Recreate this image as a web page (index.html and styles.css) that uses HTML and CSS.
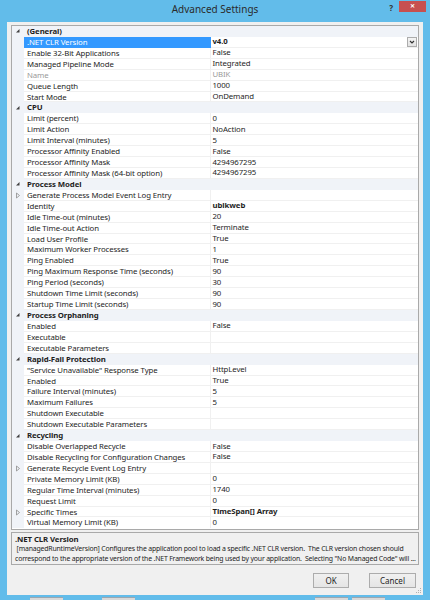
FILE: index.html
```html
<!DOCTYPE html>
<html lang="en">
<head>
    <meta charset="UTF-8">
    <meta name="viewport" content="width=device-width, initial-scale=1.0">
    <title>Advanced Settings</title>
    <link rel="stylesheet" href="styles.css">
</head>
<body>
<div class="window">
    <div class="titlebar">
        <div class="title">Advanced Settings</div>
        <div class="controls">
            <span class="help">?</span>
            <span class="close">&#x2715;</span>
        </div>
    </div>

    <div class="client">
        <div class="grid">
            <!-- General -->
            <div class="row cat"><span class="gut"><svg class="open" width="6" height="6" viewBox="0 0 6 6"><polygon points="4.5,1 4.5,4.5 1,4.5"/></svg></span><span class="name">(General)</span></div>
            <div class="row sel"><span class="gut"></span><span class="name">.NET CLR Version</span><span class="val"><b>v4.0</b><span class="drop"><svg width="6" height="4" viewBox="0 0 6 4"><polyline points="1,1 3,3 5,1"/></svg></span></span></div>
            <div class="row"><span class="gut"></span><span class="name">Enable 32-Bit Applications</span><span class="val">False</span></div>
            <div class="row"><span class="gut"></span><span class="name">Managed Pipeline Mode</span><span class="val">Integrated</span></div>
            <div class="row off"><span class="gut"></span><span class="name">Name</span><span class="val">UBIK</span></div>
            <div class="row"><span class="gut"></span><span class="name">Queue Length</span><span class="val">1000</span></div>
            <div class="row"><span class="gut"></span><span class="name">Start Mode</span><span class="val">OnDemand</span></div>

            <!-- CPU -->
            <div class="row cat"><span class="gut"><svg class="open" width="6" height="6" viewBox="0 0 6 6"><polygon points="4.5,1 4.5,4.5 1,4.5"/></svg></span><span class="name">CPU</span></div>
            <div class="row"><span class="gut"></span><span class="name">Limit (percent)</span><span class="val">0</span></div>
            <div class="row"><span class="gut"></span><span class="name">Limit Action</span><span class="val">NoAction</span></div>
            <div class="row"><span class="gut"></span><span class="name">Limit Interval (minutes)</span><span class="val">5</span></div>
            <div class="row"><span class="gut"></span><span class="name">Processor Affinity Enabled</span><span class="val">False</span></div>
            <div class="row"><span class="gut"></span><span class="name">Processor Affinity Mask</span><span class="val">4294967295</span></div>
            <div class="row"><span class="gut"></span><span class="name">Processor Affinity Mask (64-bit option)</span><span class="val">4294967295</span></div>

            <!-- Process Model -->
            <div class="row cat"><span class="gut"><svg class="open" width="6" height="6" viewBox="0 0 6 6"><polygon points="4.5,1 4.5,4.5 1,4.5"/></svg></span><span class="name">Process Model</span></div>
            <div class="row"><span class="gut"><svg class="shut" width="6" height="7" viewBox="0 0 6 7"><polygon points="1.5,1 4.5,3.5 1.5,6"/></svg></span><span class="name">Generate Process Model Event Log Entry</span><span class="val"></span></div>
            <div class="row"><span class="gut"></span><span class="name">Identity</span><span class="val"><b>ubikweb</b></span></div>
            <div class="row"><span class="gut"></span><span class="name">Idle Time-out (minutes)</span><span class="val">20</span></div>
            <div class="row"><span class="gut"></span><span class="name">Idle Time-out Action</span><span class="val">Terminate</span></div>
            <div class="row"><span class="gut"></span><span class="name">Load User Profile</span><span class="val">True</span></div>
            <div class="row"><span class="gut"></span><span class="name">Maximum Worker Processes</span><span class="val">1</span></div>
            <div class="row"><span class="gut"></span><span class="name">Ping Enabled</span><span class="val">True</span></div>
            <div class="row"><span class="gut"></span><span class="name">Ping Maximum Response Time (seconds)</span><span class="val">90</span></div>
            <div class="row"><span class="gut"></span><span class="name">Ping Period (seconds)</span><span class="val">30</span></div>
            <div class="row"><span class="gut"></span><span class="name">Shutdown Time Limit (seconds)</span><span class="val">90</span></div>
            <div class="row"><span class="gut"></span><span class="name">Startup Time Limit (seconds)</span><span class="val">90</span></div>

            <!-- Process Orphaning -->
            <div class="row cat"><span class="gut"><svg class="open" width="6" height="6" viewBox="0 0 6 6"><polygon points="4.5,1 4.5,4.5 1,4.5"/></svg></span><span class="name">Process Orphaning</span></div>
            <div class="row"><span class="gut"></span><span class="name">Enabled</span><span class="val">False</span></div>
            <div class="row"><span class="gut"></span><span class="name">Executable</span><span class="val"></span></div>
            <div class="row"><span class="gut"></span><span class="name">Executable Parameters</span><span class="val"></span></div>

            <!-- Rapid-Fail Protection -->
            <div class="row cat"><span class="gut"><svg class="open" width="6" height="6" viewBox="0 0 6 6"><polygon points="4.5,1 4.5,4.5 1,4.5"/></svg></span><span class="name">Rapid-Fail Protection</span></div>
            <div class="row"><span class="gut"></span><span class="name">"Service Unavailable" Response Type</span><span class="val">HttpLevel</span></div>
            <div class="row"><span class="gut"></span><span class="name">Enabled</span><span class="val">True</span></div>
            <div class="row"><span class="gut"></span><span class="name">Failure Interval (minutes)</span><span class="val">5</span></div>
            <div class="row"><span class="gut"></span><span class="name">Maximum Failures</span><span class="val">5</span></div>
            <div class="row"><span class="gut"></span><span class="name">Shutdown Executable</span><span class="val"></span></div>
            <div class="row"><span class="gut"></span><span class="name">Shutdown Executable Parameters</span><span class="val"></span></div>

            <!-- Recycling -->
            <div class="row cat"><span class="gut"><svg class="open" width="6" height="6" viewBox="0 0 6 6"><polygon points="4.5,1 4.5,4.5 1,4.5"/></svg></span><span class="name">Recycling</span></div>
            <div class="row"><span class="gut"></span><span class="name">Disable Overlapped Recycle</span><span class="val">False</span></div>
            <div class="row"><span class="gut"></span><span class="name">Disable Recycling for Configuration Changes</span><span class="val">False</span></div>
            <div class="row"><span class="gut"><svg class="shut" width="6" height="7" viewBox="0 0 6 7"><polygon points="1.5,1 4.5,3.5 1.5,6"/></svg></span><span class="name">Generate Recycle Event Log Entry</span><span class="val"></span></div>
            <div class="row"><span class="gut"></span><span class="name">Private Memory Limit (KB)</span><span class="val">0</span></div>
            <div class="row"><span class="gut"></span><span class="name">Regular Time Interval (minutes)</span><span class="val">1740</span></div>
            <div class="row"><span class="gut"></span><span class="name">Request Limit</span><span class="val">0</span></div>
            <div class="row"><span class="gut"><svg class="shut" width="6" height="7" viewBox="0 0 6 7"><polygon points="1.5,1 4.5,3.5 1.5,6"/></svg></span><span class="name">Specific Times</span><span class="val"><b>TimeSpan[] Array</b></span></div>
            <div class="row last"><span class="gut"></span><span class="name">Virtual Memory Limit (KB)</span><span class="val">0</span></div>
        </div>

        <div class="desc">
            <div class="desc-title">.NET CLR Version</div>
            <div class="desc-line"> [managedRuntimeVersion] Configures the application pool to load a specific .NET CLR version.  The CLR version chosen should</div>
            <div class="desc-line">correspond to the appropriate version of the .NET Framework being used by your application.  Selecting "No Managed Code" will ...</div>
        </div>

        <div class="footer">
            <div class="buttons">
                <button class="btn ok">OK</button>
                <button class="btn cancel">Cancel</button>
            </div>
            <svg class="grip" width="6" height="6" viewBox="0 0 6 6">
                <rect x="4" y="0" width="1" height="1"/>
                <rect x="2" y="2" width="1" height="1"/><rect x="4" y="2" width="1" height="1"/>
                <rect x="0" y="4" width="1" height="1"/><rect x="2" y="4" width="1" height="1"/><rect x="4" y="4" width="1" height="1"/>
            </svg>
        </div>
    </div>

    <div class="behind">
        <span class="bit b1"></span>
        <span class="bit b2"></span>
        <span class="bit b3"></span>
        <span class="bit b4"></span>
    </div>
</div>
</body>
</html>
```

FILE: styles.css
```css
:root {
    --row: 10.93px;
    --line: #f0f0f0;
    --cat: #f0f3f8;
}
body {
    margin: 0;
    font-family: "Noto Sans", "Open Sans", sans-serif;
    font-size: 7.8px;
    letter-spacing: -0.1px;
    color: #1e1e1e;
}
.window {
    width: 430px;
    height: 600px;
    background-color: #62bcea;
    display: flex;
    flex-direction: column;
    overflow: hidden;
}
.titlebar {
    height: 22px;
    flex: none;
    display: grid;
    grid-template-columns: 1fr auto 1fr;
}
.title {
    grid-column: 2;
    font-size: 10px;
    letter-spacing: 0;
    line-height: 19px;
    color: #2b2b2b;
}
.controls {
    grid-column: 3;
    justify-self: end;
    display: flex;
    align-items: flex-start;
    padding-right: 4px;
}
.help {
    font-weight: bold;
    font-size: 8px;
    color: #333;
    line-height: 15px;
    margin-right: 6px;
}
.close {
    width: 27px;
    height: 11px;
    margin-top: 1px;
    background-color: #c75050;
    color: white;
    font-size: 6px;
    font-weight: bold;
    text-align: center;
    line-height: 11px;
}
.client {
    flex: none;
    height: 573px;
    margin: 0 7px;
    padding: 3px 4px 0;
    box-sizing: border-box;
    background-color: #f0f0f0;
    display: flex;
    flex-direction: column;
}
.grid {
    height: 505px;
    flex: none;
    box-sizing: border-box;
    border: 1px solid #a9a9a9;
    background-color: white;
}
.row {
    display: flex;
    height: var(--row);
    line-height: var(--row);
    white-space: nowrap;
}
.gut {
    width: 12px;
    flex: none;
    background-color: var(--cat);
    display: flex;
    align-items: center;
    justify-content: center;
}
.name {
    width: 187px;
    flex: none;
    box-sizing: border-box;
    padding-left: 3px;
    border-right: 1px solid var(--line);
    border-bottom: 1px solid var(--line);
    overflow: hidden;
}
.val {
    flex: 1;
    padding-left: 1.5px;
    border-bottom: 1px solid var(--line);
    display: flex;
    align-items: center;
}
.val b {
    font-weight: bold;
}
.cat {
    background-color: var(--cat);
    font-weight: bold;
}
.cat .name {
    flex: 1;
    border: none;
}
.row.last .name, .row.last .val {
    border-bottom: none;
}
.sel .name {
    background-color: #3399ff;
    color: white;
    border-color: #3399ff;
}
.off {
    color: #9a9a9a;
}
.open polygon {
    fill: #404040;
}
.shut polygon {
    fill: none;
    stroke: #8c8c8c;
    stroke-width: 0.8;
}
.drop {
    margin-left: auto;
    margin-right: 1px;
    width: 8px;
    height: 8px;
    border: 1px solid #acacac;
    background: linear-gradient(#f4f4f4, #e2e2e2);
    display: flex;
    align-items: center;
    justify-content: center;
}
.drop polyline {
    fill: none;
    stroke: #333;
    stroke-width: 1.2;
}
.desc {
    height: 33px;
    flex: none;
    margin-top: 2px;
    box-sizing: border-box;
    border: 1px solid #a9a9a9;
    padding: 1px 3px 0;
    line-height: 10px;
    overflow: hidden;
}
.desc-title {
    font-weight: bold;
}
.desc-line {
    white-space: pre;
    font-size: 6.9px;
    letter-spacing: -0.17px;
}
.footer {
    flex: 1;
    display: flex;
    justify-content: flex-end;
    margin-right: -3px;
}
.buttons {
    display: flex;
    gap: 20px;
    margin-top: 8px;
    align-self: flex-start;
}
.btn {
    height: 15px;
    box-sizing: border-box;
    padding: 0;
    border: 1px solid #acacac;
    background: linear-gradient(#f0f0f0, #e5e5e5);
    font-family: inherit;
    font-size: 8px;
    line-height: 13px;
    color: #1e1e1e;
}
.ok {
    width: 36px;
}
.cancel {
    width: 47px;
}
.grip {
    align-self: flex-end;
    margin: 0 0 1px 0;
    fill: #b0b0b0;
}
.behind {
    height: 5px;
    flex: none;
    display: flex;
    align-items: flex-end;
}
.bit {
    height: 3px;
    width: 33px;
    background-color: #d9d9d9;
    border-top: 1px solid #9aa7b0;
    box-sizing: border-box;
}
.b1 { margin-left: 30px; }
.b2 { margin-left: 39px; }
.b3 { margin-left: 180px; }
.b4 { margin-left: 4px; }
```
